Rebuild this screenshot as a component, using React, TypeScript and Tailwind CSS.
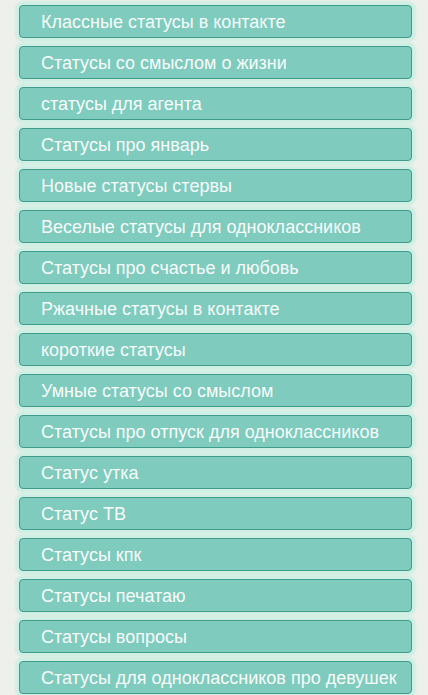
import React from "react";

const items = [
  "Классные статусы в контакте",
  "Статусы со смыслом о жизни",
  "статусы для агента",
  "Статусы про январь",
  "Новые статусы стервы",
  "Веселые статусы для одноклассников",
  "Статусы про счастье и любовь",
  "Ржачные статусы в контакте",
  "короткие статусы",
  "Умные статусы со смыслом",
  "Статусы про отпуск для одноклассников",
  "Статус утка",
  "Статус ТВ",
  "Статусы кпк",
  "Статусы печатаю",
  "Статусы вопросы",
  "Статусы для одноклассников про девушек",
];

export default function App() {
  return (
    <div
      className="w-[428px] h-[695px] overflow-hidden bg-[#eef0eb]"
      style={{ fontFamily: '"Liberation Sans", Arial, sans-serif' }}
    >
      <div className="flex flex-col gap-[8px] pt-[5px] pl-[19px] pr-[16px]">
        {items.map((t) => (
          <div
            key={t}
            className="h-[33px] flex items-center pl-[21px] rounded-[4px] border border-[#3f9c8a] bg-[#7fcbbd] text-[#f7fcfb] text-[18px] leading-none shadow-[0_0_2px_4px_#d0efe4] whitespace-nowrap"
          >
            {t}
          </div>
        ))}
      </div>
    </div>
  );
}
